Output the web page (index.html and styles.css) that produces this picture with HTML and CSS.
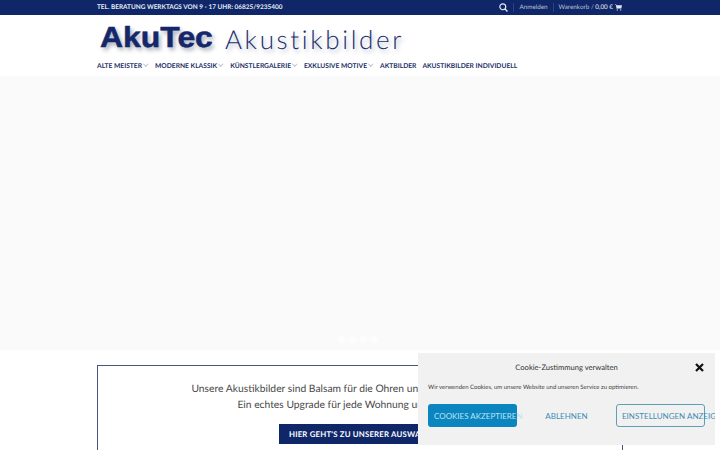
FILE: index.html
```html
<!DOCTYPE html>
<html lang="de">
<head>
  <meta charset="UTF-8" />
  <meta name="viewport" content="width=device-width, initial-scale=1.0" />
  <title>AkuTec Akustikbilder</title>
  <link rel="stylesheet" href="styles.css">
</head>
<body>
  <div class="topbar">
    <div class="wrap topbar-inner">
      <span class="phone">TEL. BERATUNG WERKTAGS VON 9 - 17 UHR: 06825/9235400</span>
      <div class="top-links">
        <svg class="search" width="9" height="9" viewBox="0 0 10 10"><circle cx="4.2" cy="4.2" r="3.3" fill="none" stroke="#e4e8f2" stroke-width="1.3"/><path d="M6.7 6.7L9.4 9.4" stroke="#e4e8f2" stroke-width="1.5"/></svg>
        <span class="sep"></span>
        <span class="top-link">Anmelden</span>
        <span class="sep"></span>
        <span class="top-link">Warenkorb / <b>0,00 €</b></span>
        <svg class="cart" width="7" height="7" viewBox="0 0 8 7"><path d="M0 0h1.4l.3 1H8L7.3 4H2.4l.2.7h4.7v.6H2L.9.6H0z" fill="#e4e8f2"/><circle cx="2.6" cy="6.3" r=".7" fill="#e4e8f2"/><circle cx="6.5" cy="6.3" r=".7" fill="#e4e8f2"/></svg>
      </div>
    </div>
  </div>

  <header class="header">
    <div class="wrap">
      <div class="logo"><span class="logo-brand">AkuTec</span><span class="logo-sub">Akustikbilder</span></div>
      <nav class="nav">
        <a>ALTE MEISTER<i class="chev"></i></a>
        <a>MODERNE KLASSIK<i class="chev"></i></a>
        <a>KÜNSTLERGALERIE<i class="chev"></i></a>
        <a>EXKLUSIVE MOTIVE<i class="chev"></i></a>
        <a>AKTBILDER</a>
        <a>AKUSTIKBILDER INDIVIDUELL</a>
      </nav>
    </div>
  </header>

  <section class="hero">
    <div class="dots"><span></span><span></span><span></span><span></span></div>
  </section>

  <section class="wrap">
    <div class="intro">
      <p>Unsere Akustikbilder sind Balsam für die Ohren und Wohltat für die Augen.</p>
      <p>Ein echtes Upgrade für jede Wohnung und jede Praxis.</p>
      <a class="btn-main">HIER GEHT'S ZU UNSERER AUSWAHL</a>
    </div>
  </section>

  <div class="cookie">
    <div class="cookie-head">
      <span>Cookie-Zustimmung verwalten</span>
      <svg class="close" width="9" height="9" viewBox="0 0 9 9"><path d="M1 1l7 7M8 1L1 8" stroke="#111" stroke-width="2.2"/></svg>
    </div>
    <p class="cookie-text">Wir verwenden Cookies, um unsere Website und unseren Service zu optimieren.</p>
    <div class="cookie-btns">
      <button class="btn-accept"><span>COOKIES AKZEPTIEREN</span></button>
      <button class="btn-deny"><span>ABLEHNEN</span></button>
      <button class="btn-settings"><span>EINSTELLUNGEN ANZEIGEN</span></button>
    </div>
  </div>
</body>
</html>
```

FILE: styles.css
```css
* {
  box-sizing: border-box;
}
html, body {
  height: 450px;
  overflow: hidden;
}
body {
  margin: 0;
  font-family: Lato, sans-serif;
  color: #555;
  background: #fff;
  text-rendering: geometricPrecision;
}
.wrap {
  width: 526px;
  margin-left: 97px;
}
.topbar {
  height: 15px;
  background: #0f2769;
}
.topbar-inner {
  height: 15px;
  display: flex;
  justify-content: space-between;
  align-items: center;
}
.phone {
  font-size: 6.45px;
  font-weight: 700;
  color: #e8ebf3;
}
.top-links {
  display: flex;
  align-items: center;
  font-size: 6.3px;
  color: #b9c2d9;
  padding-right: 1px;
}
.top-links b {
  font-weight: 400;
  color: #eef0f6;
}
.sep {
  width: 1px;
  height: 9px;
  margin: 0 5px;
  background: #2b4180;
}
.cart {
  margin-left: 2px;
}
.header {
  height: 61px;
  background: #fff;
}
.logo {
  height: 47px;
  display: flex;
  align-items: center;
  padding-left: 3px;
}
.logo-brand {
  display: inline-block;
  width: 125px;
  font-family: "Liberation Sans", sans-serif;
  font-size: 29px;
  font-weight: 700;
  color: #14276a;
  -webkit-text-stroke: 0.5px #14276a;
  text-shadow: 2px 3px 4px rgba(70, 80, 110, 0.5);
  transform: scaleX(1.1);
  transform-origin: left;
}
.logo-sub {
  font-size: 26px;
  font-weight: 300;
  letter-spacing: 2.65px;
  color: #1d2f6e;
  text-shadow: 2px 3px 4px rgba(70, 80, 110, 0.4);
}
.nav {
  display: flex;
  gap: 6px;
  font-size: 6.7px;
  line-height: 8px;
  font-weight: 700;
  color: #1b2f68;
}
.chev {
  display: inline-block;
  width: 3.5px;
  height: 3.5px;
  margin: 0 1.5px 1.5px 2px;
  vertical-align: 1px;
  border-right: 1px solid #bcc2cf;
  border-bottom: 1px solid #bcc2cf;
  transform: rotate(45deg);
}
.hero {
  height: 274px;
  background: #fafafa;
  display: flex;
  justify-content: center;
  align-items: flex-end;
  padding: 0 5px 7px 0;
}
.dots {
  display: flex;
  gap: 4px;
}
.dots span {
  width: 7px;
  height: 7px;
  border-radius: 50%;
  background: #fdfdfd;
}
.intro {
  margin-top: 15px;
  height: 120px;
  border: 1px solid #4a5480;
  padding-top: 15px;
  text-align: center;
}
.intro p {
  margin: 0;
  font-size: 10.3px;
  line-height: 16px;
  color: #4a4a4a;
}
.btn-main {
  display: inline-block;
  margin-top: 11px;
  padding: 0 10px;
  height: 20px;
  line-height: 20px;
  background: #0f2769;
  color: #fff;
  font-size: 7.8px;
  font-weight: 700;
  letter-spacing: 0.2px;
}
.cookie {
  position: absolute;
  left: 418px;
  top: 353px;
  width: 297px;
  height: 92px;
  background: #f1f1f1;
  padding: 0 10px;
  overflow: hidden;
}
.cookie-head {
  position: relative;
  height: 28px;
  display: flex;
  justify-content: center;
  align-items: center;
  font-size: 7.6px;
  color: #333;
}
.close {
  position: absolute;
  right: 1px;
  top: 10px;
}
.cookie-text {
  margin: 0;
  padding-top: 3px;
  font-size: 6px;
  line-height: 8px;
  color: #444;
}
.cookie-btns {
  display: flex;
  gap: 10px;
  margin-top: 12px;
}
.cookie-btns button {
  width: 89px;
  height: 23px;
  padding: 0;
  border: 1px solid transparent;
  border-radius: 3px;
  background: none;
  font-family: Lato, sans-serif;
  font-size: 8px;
  color: #3d8db5;
  white-space: nowrap;
  display: flex;
  justify-content: flex-start;
  align-items: center;
}
.cookie-btns span {
  padding-left: 5px;
}
.cookie-btns .btn-accept {
  background: #0a85bf;
  color: #bfe3f2;
}
.cookie-btns .btn-deny {
  justify-content: center;
}
.cookie-btns .btn-deny span {
  padding: 0;
}
.cookie-btns .btn-settings {
  border-color: #5f9fb5;
}
```
